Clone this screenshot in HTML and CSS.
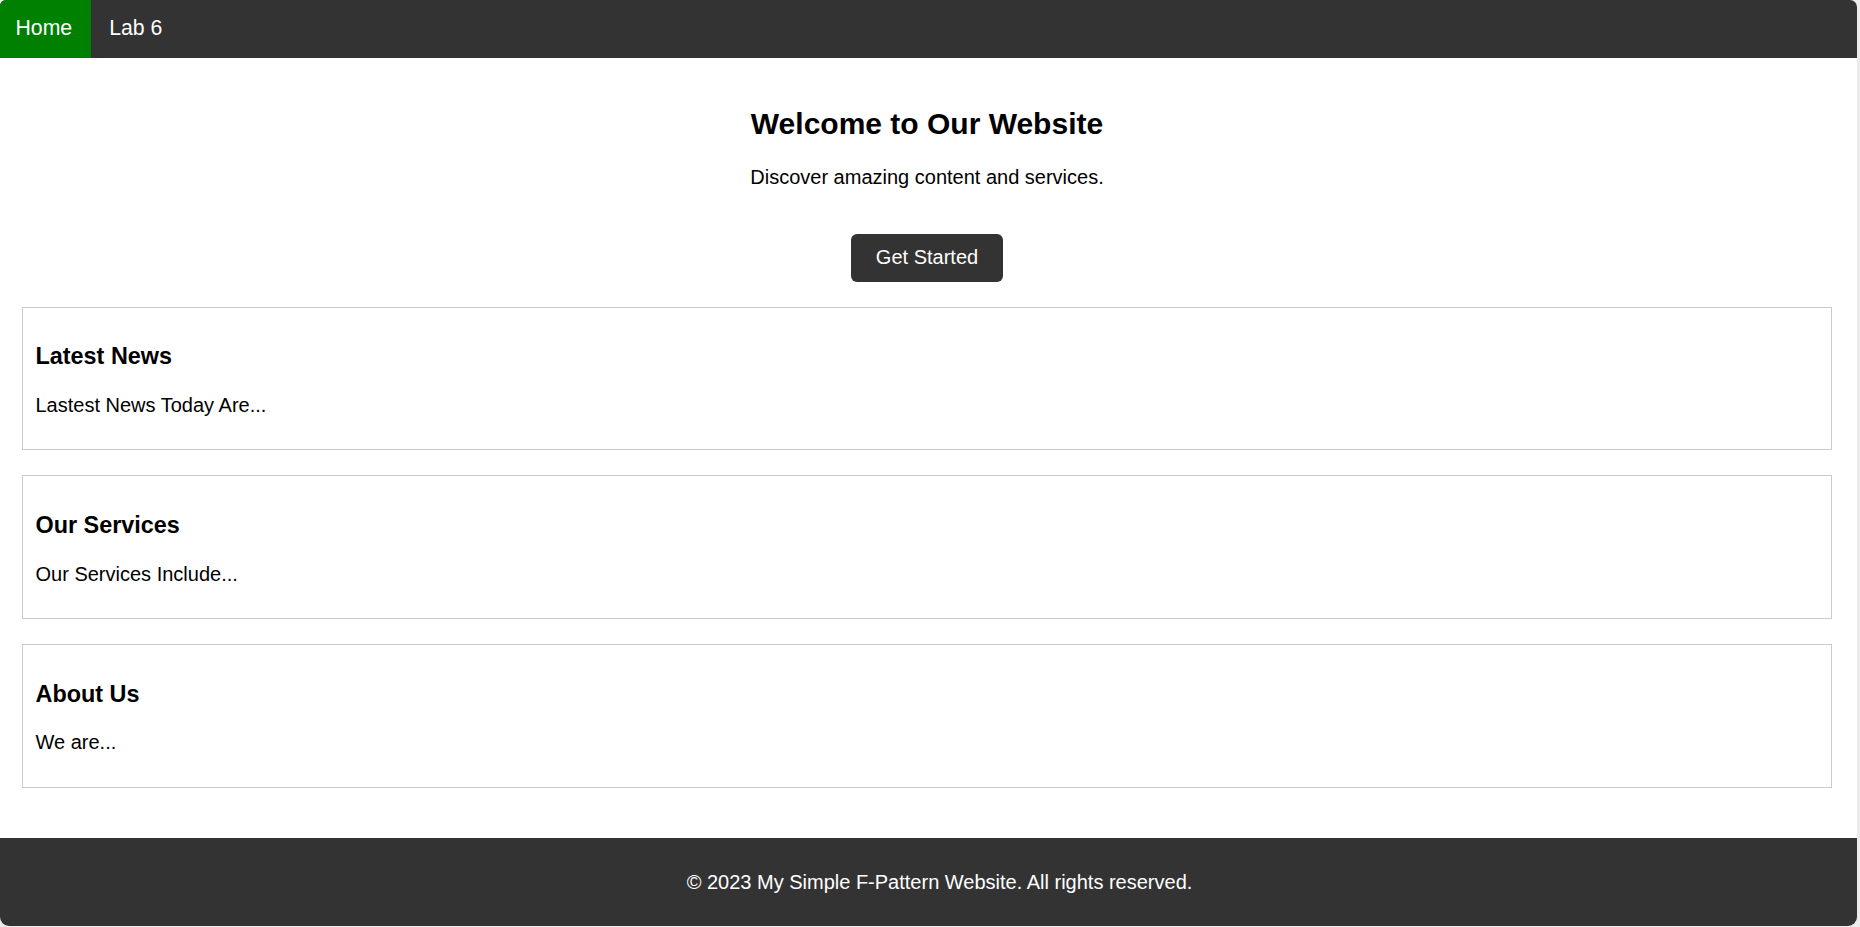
FILE: index.html
```html
<!DOCTYPE html>
<html lang="en">
<head>
<meta charset="utf-8">
<title>My Simple F-Pattern Website</title>
<link rel="stylesheet" href="styles.css">
</head>
<body>
<div class="window">
  <div class="page">
    <nav class="topnav">
      <a class="nav-link active" href="#">Home</a>
      <a class="nav-link" href="#">Lab 6</a>
    </nav>
    <main class="content">
      <header class="hero">
        <h2 class="hero-title">Welcome to Our Website</h2>
        <p class="hero-text">Discover amazing content and services.</p>
        <a class="btn" href="#">Get Started</a>
      </header>
      <section class="card">
        <h3 class="card-title">Latest News</h3>
        <p class="card-text">Lastest News Today Are...</p>
      </section>
      <section class="card">
        <h3 class="card-title">Our Services</h3>
        <p class="card-text">Our Services Include...</p>
      </section>
      <section class="card">
        <h3 class="card-title">About Us</h3>
        <p class="card-text">We are...</p>
      </section>
    </main>
    <footer class="footer">
      <p class="footer-text">&copy; 2023 My Simple F-Pattern Website. All rights reserved.</p>
    </footer>
  </div>
</div>
</body>
</html>
```
FILE: styles.css
```css
html, body {
  margin: 0;
  padding: 0;
}

body {
  background: #ececec;
  font-family: "Liberation Sans", Arial, sans-serif;
  font-size: 20px;
  color: #000;
  width: 1860px;
  height: 927px;
  overflow: hidden;
}

.window {
  width: 1857px;
  height: 926px;
  overflow: hidden;
  background: #fff;
  border-radius: 6px 7px 9px 9px;
}

.page {
  width: 1860px;
  height: 100%;
  margin-left: -3px;
  display: flex;
  flex-direction: column;
}

.topnav {
  display: flex;
  background: #333;
}

.nav-link {
  display: block;
  padding: 16.3px 18.5px;
  font-size: 21.25px;
  color: #fff;
  text-decoration: none;
}

.nav-link.active {
  background: #008000;
}

.content {
  flex: 1;
}

.hero {
  padding-top: 24px;
  text-align: center;
}

.hero-title {
  font-size: 30px;
  font-weight: bold;
  margin: 25px 0;
}

.hero-text {
  margin: 20px 0;
}

.btn {
  display: block;
  width: fit-content;
  margin: 45px auto 0;
  padding: 12.5px 25px;
  background: #333;
  color: #fff;
  text-decoration: none;
  border-radius: 6px;
}

.card {
  margin: 25px;
  padding: 12.5px;
  border: 1px solid #ccc;
}

.card-title {
  font-size: 23.4px;
  font-weight: bold;
  margin: 23.4px 0;
}

.card-text {
  margin: 20px 0;
}

.footer {
  width: 100%;
  padding: 12.5px;
  background: #333;
  color: #fff;
  text-align: center;
}

.footer-text {
  margin: 20px 0;
}
```
